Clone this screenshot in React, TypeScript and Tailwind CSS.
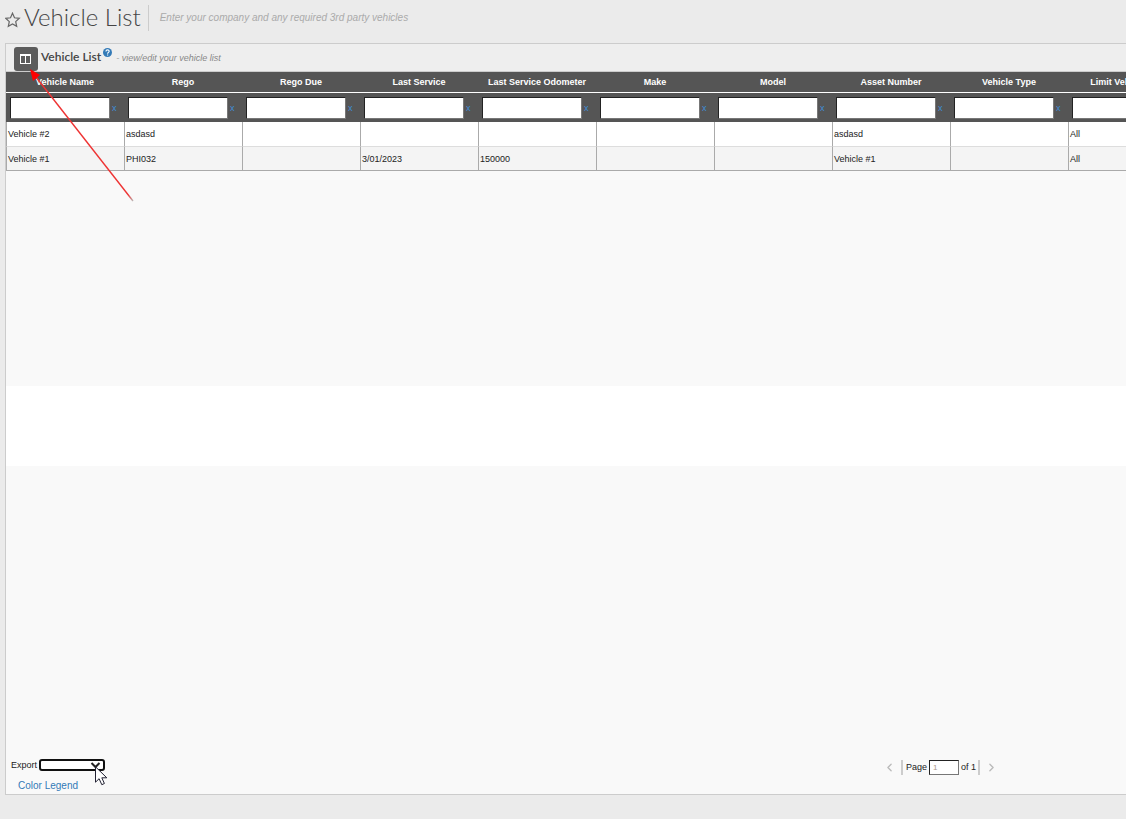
import { ChevronLeft, ChevronRight } from "lucide-react";

const columns = [
  "Vehicle Name",
  "Rego",
  "Rego Due",
  "Last Service",
  "Last Service Odometer",
  "Make",
  "Model",
  "Asset Number",
  "Vehicle Type",
  "Limit Vehicle List",
];

const vehicles = [
  ["Vehicle #2", "asdasd", "", "", "", "", "", "asdasd", "", "All"],
  ["Vehicle #1", "PHI032", "", "3/01/2023", "150000", "", "", "Vehicle #1", "", "All"],
];

const PageTitle = () => {
  return (
    <header className="flex h-[43px] shrink-0 items-start">
      <button aria-label="Add to favourites" className="mt-3 h-4 w-4 text-[#666]">
        <svg viewBox="0 0 16 16" className="h-4 w-4" fill="none" stroke="currentColor" strokeWidth="1.2">
          <path d="M7.5 1.2 9.5 5.8 14.3 6.3 10.7 9.6 11.7 14.3 7.5 11.9 3.3 14.3 4.3 9.6 .7 6.3 5.5 5.8Z" />
        </svg>
      </button>
      <h1 className="ml-[3px] font-['Lato',sans-serif] text-[24px] leading-[34px] font-light whitespace-nowrap text-[#444]">
        Vehicle List
      </h1>
      <p className="mt-[5px] ml-[7px] h-[26px] border-l border-[#ccc] pl-[11px] text-[10px] leading-[26px] font-normal whitespace-nowrap text-[#aaa] italic">
        Enter your company and any required 3rd party vehicles
      </p>
    </header>
  );
};

const PanelHeader = () => {
  return (
    <div className="flex h-7 items-start border-b border-[#ccc] bg-[#eee] pl-2">
      <button
        aria-label="Choose columns"
        className="mt-[3px] flex h-6 w-6 shrink-0 items-center justify-center rounded-[3px] bg-[#5c5c5c]"
      >
        <svg width="12" height="12" viewBox="0 0 12 12">
          <path d="M0 1h11v10H0ZM1 3v7h4V3ZM6 3v7h4V3Z" fill="#fff" fillRule="evenodd" />
        </svg>
      </button>
      <h2 className="ml-[3px] font-['Lato',sans-serif] text-[12px] leading-[26px] font-semibold whitespace-nowrap text-[#444]">
        Vehicle List
      </h2>
      <button aria-label="Help" className="mt-1 ml-[2px] h-[9px] w-[9px]">
        <svg viewBox="0 0 16 16" className="h-[9px] w-[9px]">
          <circle cx="8" cy="8" r="8" fill="#337ab7" />
          <path d="M5.2 6c0-3.5 5.8-3.5 5.8-.2C11 7.700 8.200 7.800 8.200 10M8.200 11.500v2" fill="none" stroke="#fff" strokeWidth="2" />
        </svg>
      </button>
      <p className="ml-[4px] text-[9px] leading-7 whitespace-nowrap text-[#888] italic">- view/edit your vehicle list</p>
    </div>
  );
};

const VehicleTable = () => {
  return (
    <div className="shrink-0 overflow-hidden">
      <table className="w-[1180px] table-fixed border-separate border-spacing-0">
        <thead className="bg-[#555] text-white">
          <tr>
            {columns.map((name) => (
              <th key={name} className="h-[21px] border-b border-white p-0 text-center text-[9px] leading-5 font-bold whitespace-nowrap">
                {name}
              </th>
            ))}
          </tr>
          <tr>
            {columns.map((name) => (
              <td key={name} className="h-[29px] p-0">
                <div className="flex items-center pl-1">
                  <input
                    aria-label={`Filter ${name}`}
                    className="h-[22px] w-[100px] border border-t-[#222] border-r-[#777] border-b-[#777] border-l-[#222] bg-white px-1 text-[9px] text-black outline-none"
                  />
                  <button aria-label={`Clear ${name}`} className="ml-[2px] text-[9px] leading-5 text-[#3f8fd8]">
                    x
                  </button>
                </div>
              </td>
            ))}
          </tr>
        </thead>
        <tbody>
          {vehicles.map((row) => (
            <tr key={row[0]} className="bg-white even:bg-[#f4f4f4]">
              {row.map((cell, i) => (
                <td
                  key={columns[i]}
                  className="h-6 border-b border-l border-b-[#ddd] border-l-[#aaa] py-0 pr-0 pl-px text-[9px] leading-[22px] text-[#222] in-[tr:first-child]:h-[25px] in-[tr:last-child]:border-b-[#aaa]"
                >
                  {cell}
                </td>
              ))}
            </tr>
          ))}
        </tbody>
      </table>
    </div>
  );
};

const PanelFooter = () => {
  return (
    <footer className="shrink-0 text-[9px] text-[#222]">
      <div className="flex h-5 items-center pl-[5px]">
        <label htmlFor="export" className="leading-4">
          Export
        </label>
        <div className="relative ml-[2px] flex">
          <select id="export" className="h-3 w-[66px] appearance-none rounded-[3px] border-2 border-[#101010] bg-white outline-none">
            <option></option>
          </select>
          <svg className="pointer-events-none absolute top-[3px] right-1" width="11" height="7" viewBox="0 0 11 7">
            <path d="m1.500 1 4 4 4-4" fill="none" stroke="#222" strokeWidth="2" />
          </svg>
          {/* Mouse pointer */}
          <svg className="pointer-events-none absolute top-[7px] left-14 z-10" width="13" height="20" viewBox="0 0 13 20">
            <path d="M.5.8v15.400l3.600-3.500 2.700 6 2.600-1.200-2.600-5.700h5Z" fill="#fff" stroke="#223" />
          </svg>
        </div>
        <nav aria-label="Pagination" className="mr-32 ml-auto flex items-center pt-1">
          <button aria-label="Previous page" className="text-[#bbb]">
            <ChevronLeft size={13} strokeWidth={2.5} />
          </button>
          <div className="ml-[5px] flex h-[15px] items-center border-x-2 border-[#ccc] pr-[2px] pl-[3px]">
            <label htmlFor="page" className="leading-3">
              Page
            </label>
            <input
              id="page"
              defaultValue="1"
              className="mx-[2px] h-[15px] w-[30px] border border-t-[#222] border-r-[#777] border-b-[#777] border-l-[#222] bg-white px-[3px] text-[8px] text-[#a98] outline-none"
            />
            <span className="leading-3">of 1</span>
          </div>
          <button aria-label="Next page" className="ml-[5px] text-[#bbb]">
            <ChevronRight size={13} strokeWidth={2.5} />
          </button>
        </nav>
      </div>
      <a href="#legend" className="mt-[3px] ml-3 block w-fit text-[10px] leading-4 text-[#337ab7]">
        Color Legend
      </a>
    </footer>
  );
};

const App = () => {
  return (
    <div className="relative flex min-h-screen flex-col overflow-hidden bg-[#ebebeb] pb-6 pl-[5px] font-['Liberation_Sans',Arial,sans-serif]">
      <PageTitle />
      <main className="flex flex-1 flex-col border border-r-0 border-[#ccc] bg-[#f9f9f9]">
        <PanelHeader />
        <VehicleTable />
        <div className="flex flex-1 flex-col pt-[215px]">
          <div className="h-20 bg-white" />
        </div>
        <PanelFooter />
      </main>

      {/* Arrow pointing at the column chooser */}
      <svg className="pointer-events-none absolute top-[69px] left-[29px]" width="106" height="134" viewBox="0 0 106 134">
        <defs>
          <linearGradient id="tail" x1="0" y1="0" x2="1" y2="1">
            <stop offset="0.95" stopColor="#e33" />
            <stop offset="1" stopColor="#bbb" />
          </linearGradient>
        </defs>
        <path d="m7 8 97 124" stroke="url(#tail)" strokeWidth="1.400" />
        <path d="m1 0 10 6-7 6Z" fill="#f00" />
      </svg>
    </div>
  );
};

export default App;
